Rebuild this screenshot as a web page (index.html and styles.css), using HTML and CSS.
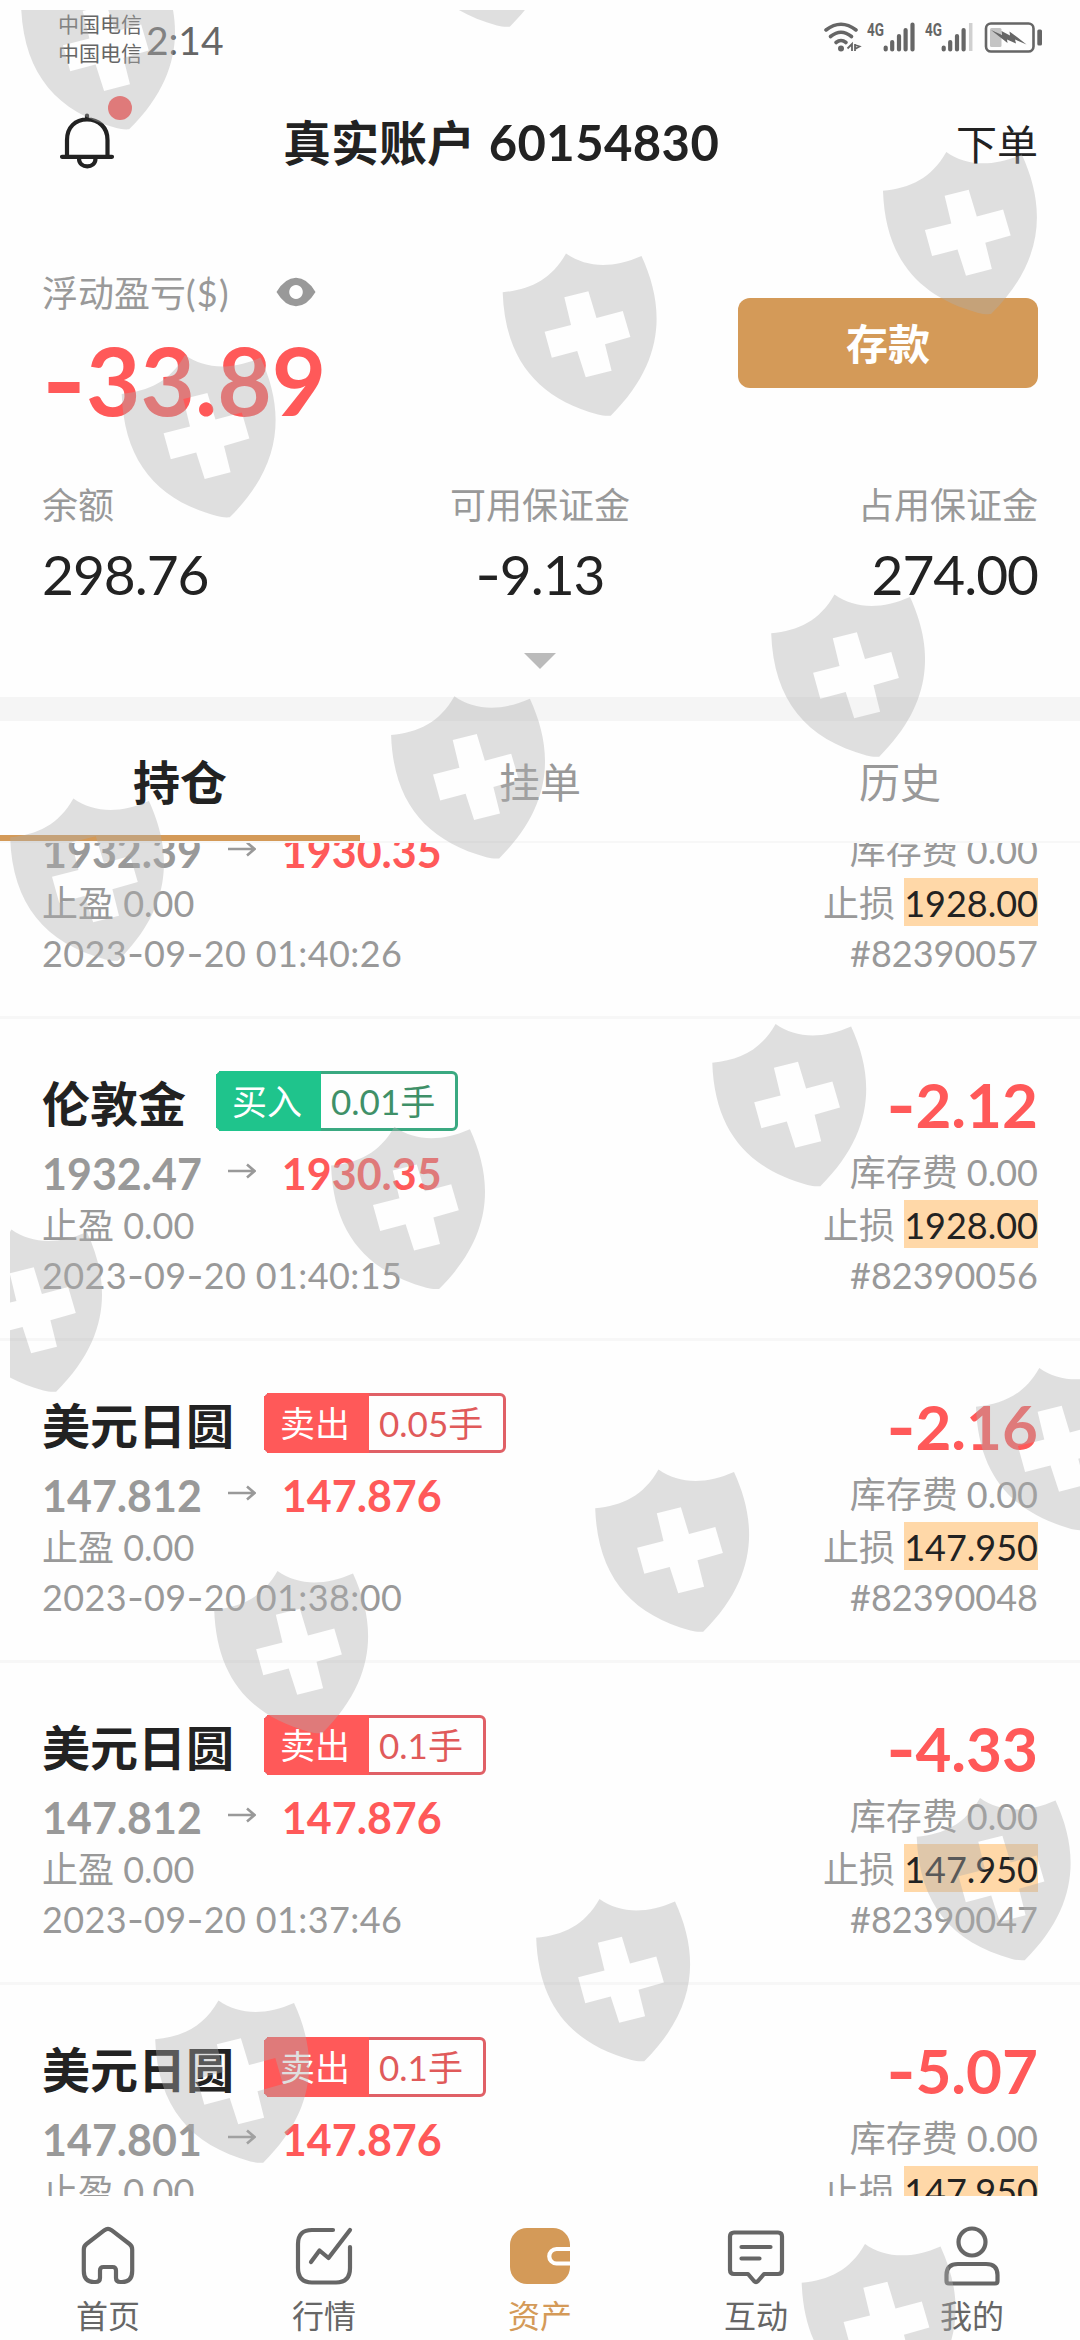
FILE: index.html
```html
<!DOCTYPE html>
<html lang="zh-CN">
<head>
    <meta charset="UTF-8">
    <meta name="viewport" content="width=device-width, initial-scale=1.0">
    <title>资产</title>
    <link rel="stylesheet" href="styles.css">
</head>
<body>
    <div id="app">
        <!-- 状态栏 -->
        <div class="status-bar">
            <div class="carrier">
                <div>中国电信</div>
                <div>中国电信</div>
            </div>
            <div class="time">2:14</div>
            <svg class="status-icons" width="222" height="40" viewBox="820 18 222 40">
                <g fill="none" stroke="#666" stroke-width="3.6" stroke-linecap="round">
                    <path d="M825 30Q840 18.500 855 30"/>
                    <path d="M829.500 36.500Q840 28 850.500 36.500"/>
                    <path d="M835 42.500Q840 38.500 845 42.500"/>
                </g>
                <circle cx="840" cy="48.500" r="3" fill="#666"/>
                <path d="M846.500 48.500L851 44V51M854 44V51M854 45L858.500 46.500L854 49" fill="none" stroke="#666" stroke-width="1.800"/>
                <text x="866" y="36" textLength="17" lengthAdjust="spacingAndGlyphs" class="net">4G</text>
                <path d="M884.700 47.500V49.500M891.200 42V49.500M898 36V49.500M904.600 30V49.500M911.500 24.500V49.500" class="bars"/>
                <text x="924" y="36" textLength="17" lengthAdjust="spacingAndGlyphs" class="net">4G</text>
                <path d="M942.700 47.500V49.500M949.200 42V49.500M956 36V49.500M962.600 30V49.500" class="bars"/>
                <path d="M969.700 23V51" stroke="#d0d0d0" stroke-width="3.500"/>
                <rect x="989" y="28" width="11.500" height="19" rx="1.500" fill="#c4c4c4"/>
                <rect x="985" y="23.500" width="47.500" height="28" rx="5" fill="none" stroke="#666" stroke-width="2.600"/>
                <rect x="1036.300" y="29.500" width="4.700" height="16" rx="1.500" fill="#666"/>
                <path d="M990 30L1001 35L1000.500 31L1009 35.500L1008.500 31.500L1016 37L1025.500 44.500L1014 39.500L1015 43.500L1006 39.500L1006.500 43Z" fill="#666"/>
            </svg>
        </div>

        <!-- 标题 -->
        <div class="header">
            <div class="bell">
                <svg width="60" height="60" viewBox="56 110 60 60" fill="none" stroke="#222" stroke-width="4.200" stroke-linecap="round">
                    <path d="M87 115.500V119M67 156V140C67 127 75.500 119.500 87 119.500S107.500 127 107.500 140V156M62 156.800H112M79 158.500C79 169 95.500 169 95.500 158.500"/>
                </svg>
                <span class="dot"></span>
            </div>
            <h1>真实账户 <span>60154830</span></h1>
            <div class="order">下单</div>
        </div>

        <!-- 账户概览 -->
        <div class="summary">
            <div class="profit">
                <div>
                    <div class="label">浮动盈亏<span class="unit">($)</span>
                        <svg class="eye" width="40" height="30" viewBox="0 0 40 30"><path fill="#999" fill-rule="evenodd" d="M.5 15Q9 .8 20 .8T39.500 15Q31 29.200 20 29.200T.5 15ZM20 8a6.800 7 0 1 0 .01 0Z"/></svg>
                    </div>
                    <div class="profit-num"><i>-</i>33.89</div>
                </div>
                <button class="deposit">存款</button>
            </div>
            <div class="funds">
                <div><div class="label">余额</div><div class="num">298.76</div></div>
                <div><div class="label">可用保证金</div><div class="num"><i>-</i>9.13</div></div>
                <div><div class="label">占用保证金</div><div class="num">274.00</div></div>
            </div>
            <div class="more"></div>
        </div>

        <div class="tabs">
            <div class="tab tab-active">持仓</div>
            <div class="tab">挂单</div>
            <div class="tab">历史</div>
        </div>

        <!-- 持仓列表 -->
        <div class="list">
            <div class="item">
                <div class="left">
                    <div class="price"><span>1932.39</span><svg class="arrow" width="28" height="16" viewBox="0 0 28 16"><path d="M0 8H26M19 1.500L26.500 8L19 14.500"/></svg><span class="now">1930.35</span></div>
                    <div class="line">止盈 <span>0.00</span></div>
                    <div class="date">2023<i>-</i>09<i>-</i>20 01:40:26</div>
                </div>
                <div class="right">
                    <div class="fee">库存费 <span>0.00</span></div>
                    <div class="line">止损 <span class="stop">1928.00</span></div>
                    <div class="no">#82390057</div>
                </div>
            </div>
            <div class="item">
                <div class="left">
                    <div class="name">伦敦金<div class="tag buy"><b>买入</b><span>0.01手</span></div></div>
                    <div class="price"><span>1932.47</span><svg class="arrow" width="28" height="16" viewBox="0 0 28 16"><path d="M0 8H26M19 1.500L26.500 8L19 14.500"/></svg><span class="now">1930.35</span></div>
                    <div class="line">止盈 <span>0.00</span></div>
                    <div class="date">2023<i>-</i>09<i>-</i>20 01:40:15</div>
                </div>
                <div class="right">
                    <div class="loss"><i>-</i>2.12</div>
                    <div class="fee">库存费 <span>0.00</span></div>
                    <div class="line">止损 <span class="stop">1928.00</span></div>
                    <div class="no">#82390056</div>
                </div>
            </div>
            <div class="item">
                <div class="left">
                    <div class="name">美元日圆<div class="tag sell"><b>卖出</b><span>0.05手</span></div></div>
                    <div class="price"><span>147.812</span><svg class="arrow" width="28" height="16" viewBox="0 0 28 16"><path d="M0 8H26M19 1.500L26.500 8L19 14.500"/></svg><span class="now">147.876</span></div>
                    <div class="line">止盈 <span>0.00</span></div>
                    <div class="date">2023<i>-</i>09<i>-</i>20 01:38:00</div>
                </div>
                <div class="right">
                    <div class="loss"><i>-</i>2.16</div>
                    <div class="fee">库存费 <span>0.00</span></div>
                    <div class="line">止损 <span class="stop">147.950</span></div>
                    <div class="no">#82390048</div>
                </div>
            </div>
            <div class="item">
                <div class="left">
                    <div class="name">美元日圆<div class="tag sell"><b>卖出</b><span>0.1手</span></div></div>
                    <div class="price"><span>147.812</span><svg class="arrow" width="28" height="16" viewBox="0 0 28 16"><path d="M0 8H26M19 1.500L26.500 8L19 14.500"/></svg><span class="now">147.876</span></div>
                    <div class="line">止盈 <span>0.00</span></div>
                    <div class="date">2023<i>-</i>09<i>-</i>20 01:37:46</div>
                </div>
                <div class="right">
                    <div class="loss"><i>-</i>4.33</div>
                    <div class="fee">库存费 <span>0.00</span></div>
                    <div class="line">止损 <span class="stop">147.950</span></div>
                    <div class="no">#82390047</div>
                </div>
            </div>
            <div class="item">
                <div class="left">
                    <div class="name">美元日圆<div class="tag sell"><b>卖出</b><span>0.1手</span></div></div>
                    <div class="price"><span>147.801</span><svg class="arrow" width="28" height="16" viewBox="0 0 28 16"><path d="M0 8H26M19 1.500L26.500 8L19 14.500"/></svg><span class="now">147.876</span></div>
                    <div class="line">止盈 <span>0.00</span></div>
                </div>
                <div class="right">
                    <div class="loss"><i>-</i>5.07</div>
                    <div class="fee">库存费 <span>0.00</span></div>
                    <div class="line">止损 <span class="stop">147.950</span></div>
                </div>
            </div>
        </div>

        <!-- 底部导航 -->
        <div class="nav">
            <div class="nav-item">
                <svg width="60" height="62" viewBox="0 0 60 62">
                    <path d="M5.800 24.500Q5.800 21 8.500 19L26.500 5.200Q30 2.700 33.500 5.200L51.500 19Q54.200 21 54.200 24.500V46Q54.200 57 44 57H42.500Q38 57 38 53V45.500Q38 42 34.500 42H25.500Q22 42 22 45.500V53Q22 57 17.500 57H16Q5.800 57 5.800 46Z"/>
                </svg>
                <div>首页</div>
            </div>
            <div class="nav-item">
                <svg width="60" height="62" viewBox="0 0 60 62">
                    <path d="M39 5H18Q4 5 4 19V43Q4 57.500 18 57.500H42Q56 57.500 56 43V22M17 37L25.500 25.500L34.500 33L56 5"/>
                </svg>
                <div>行情</div>
            </div>
            <div class="nav-item nav-active">
                <svg width="60" height="62" viewBox="0 0 60 62">
                    <rect x="0" y="3" width="60" height="56" rx="17" fill="#d49a58" stroke="none"/>
                    <path d="M61 24H46.500a7.200 7.200 0 0 0 0 14.500H61" stroke="#fff" stroke-linecap="butt"/>
                </svg>
                <div>资产</div>
            </div>
            <div class="nav-item">
                <svg width="60" height="62" viewBox="0 0 60 62">
                    <path d="M8 7.500H52Q56 7.500 56 11.500V45Q56 49 52 49H38L32 56Q30 58 28 56L22 49H8Q4 49 4 45V11.500Q4 7.500 8 7.500ZM15.500 22H44.500M15.500 33.500H33.500"/>
                </svg>
                <div>互动</div>
            </div>
            <div class="nav-item">
                <svg width="60" height="62" viewBox="0 0 60 62">
                    <circle cx="30" cy="17" r="13.500"/>
                    <path d="M16 39H44Q55.500 39 55.500 50V56Q55.500 58.500 53 58.500H7Q4.500 58.500 4.500 56V50Q4.500 39 16 39Z"/>
                </svg>
                <div>我的</div>
            </div>
        </div>

        <!-- 水印 -->
        <svg class="mark" width="1070" height="2330" viewBox="10 10 1070 2330">
            <defs>
                <path id="shield" fill-rule="evenodd" d="M.7 39.300C28 36.500 49 27 64 .5C84 14.500 110 16 139.500 3C162 52 165 107 108.700 162.700C104 163 100 162.500 96 161.500C36 145 3 107 .7 39.300ZM62.300 44.300L86.400 38.300L94.500 65L120.800 58L128.400 84L103 91.300L109.600 117.700L83.700 124.300L75.200 98L49.800 104.700L42.600 78.700L69 72Z"/>
            </defs>
            <use href="#shield" x="20.400" y="-33.400"/>
            <use href="#shield" x="401" y="-136"/>
            <use href="#shield" x="882.300" y="151.400"/>
            <use href="#shield" x="502" y="253"/>
            <use href="#shield" x="121" y="354.600"/>
            <use href="#shield" x="770.500" y="594"/>
            <use href="#shield" x="390.400" y="695.700"/>
            <use href="#shield" x="9.400" y="798"/>
            <use href="#shield" x="711.600" y="1023.500"/>
            <use href="#shield" x="330.400" y="1126.300"/>
            <use href="#shield" x="-52.600" y="1229"/>
            <use href="#shield" x="975.300" y="1367.400"/>
            <use href="#shield" x="594.500" y="1469"/>
            <use href="#shield" x="213.500" y="1570.500"/>
            <use href="#shield" x="916" y="1797.500"/>
            <use href="#shield" x="535.500" y="1898.500"/>
            <use href="#shield" x="154.500" y="2000"/>
            <use href="#shield" x="801" y="2243.400"/>
        </svg>
    </div>
</body>
</html>
```
FILE: styles.css
```css
*{
    box-sizing: border-box;
}
body{
    margin: 0;
    background-color: #fefefe;
    color: #222;
    font-family: Lato, "Noto Sans CJK SC", sans-serif;
    font-size: 36px;
}
#app{
    position: relative;
    width: 1080px;
    height: 2340px;
    overflow: hidden;
    display: flex;
    flex-direction: column;
}
/* 负号、连字符 */
i{
    font-family: Inter, sans-serif;
    font-style: normal;
    line-height: 1;
}
.status-bar{
    display: flex;
    height: 82px;
    padding: 9px 37px 0 58px;
    color: #666;
}
.carrier{
    width: 88px;
    font-size: 21px;
    line-height: 29px;
    white-space: nowrap;
}
.time{
    font-size: 39px;
    line-height: 62px;
}
.status-icons{
    margin: 9px 0 0 auto;
}
.net{
    font-family: Roboto, sans-serif;
    font-size: 19px;
    font-weight: bold;
    fill: #666;
}
.bars{
    stroke: #666;
    stroke-width: 4.2;
    stroke-linecap: round;
}
.header{
    display: flex;
    align-items: center;
    height: 124px;
    padding: 0 42px 4px 56px;
}
.bell{
    position: relative;
    width: 227px;
    height: 64px;
}
.dot{
    position: absolute;
    left: 52px;
    top: -14px;
    width: 24px;
    height: 24px;
    border-radius: 50%;
    background-color: #ff5959;
}
h1{
    margin: 0;
    font-size: 48px;
    font-weight: bold;
    line-height: 60px;
}
h1 span{
    margin-left: 2px;
    font-size: 49px;
    letter-spacing: 0.4px;
}
.order{
    margin-left: auto;
    width: 82px;
    font-size: 41px;
}
.summary{
    height: 515px;
    padding: 60px 42px 0;
    border-bottom: 24px solid #f5f5f5;
}
.profit{
    display: flex;
    justify-content: space-between;
    height: 212px;
}
.label{
    color: #999;
    line-height: 54px;
    white-space: nowrap;
}
.unit{
    letter-spacing: 1.2px;
}
.eye{
    margin-left: 37px;
    vertical-align: 0;
}
.profit-num{
    color: #ff5959;
    font-size: 94px;
    font-weight: bold;
    line-height: 120px;
}
.deposit{
    width: 300px;
    height: 90px;
    margin-top: 32px;
    padding: 0 0 4px;
    border: none;
    border-radius: 12px;
    background-color: #d49a58;
    color: white;
    font-family: inherit;
    font-size: 42px;
    font-weight: bold;
}
.funds{
    display: flex;
}
.funds > div{
    flex: 1;
}
.funds > div:nth-child(2){
    text-align: center;
}
.funds > div:nth-child(3){
    text-align: right;
}
.num{
    font-size: 55px;
    line-height: 84px;
    letter-spacing: -1px;
}
.more{
    width: 32px;
    height: 16px;
    margin: 37px auto 0;
    background-color: #bbb;
    clip-path: polygon(0 0, 100% 0, 50% 100%);
}
.tabs{
    display: flex;
    height: 122px;
    border-bottom: 2px solid #f7f7f7;
}
.tab{
    flex: 1;
    height: 120px;
    line-height: 123px;
    text-align: center;
    font-size: 41px;
    color: #999;
}
.tab-active{
    color: #222;
    font-size: 47px;
    font-weight: bold;
    border-bottom: 6px solid #d49a58;
}
.list{
    height: 1353px;
    overflow: hidden;
}
.item{
    display: flex;
    justify-content: space-between;
    height: 322px;
    padding: 52px 42px 0;
    border-bottom: 3px solid #f7f7f7;
    color: #999;
}
.item:first-child{
    height: 195px;
    margin-top: -19px;
    padding-top: 0;
}
.name{
    display: flex;
    align-items: center;
    gap: 30px;
    height: 60px;
    margin-bottom: 15px;
    color: #222;
    font-size: 48px;
    font-weight: bold;
}
.tag{
    display: flex;
    height: 60px;
    border: 3px solid;
    border-radius: 6px;
    font-size: 35px;
    line-height: 54px;
}
.tag b{
    width: 102px;
    padding-right: 6px;
    text-align: center;
    font-weight: normal;
    color: white;
}
.tag span{
    padding: 0 20px 0 10px;
    font-weight: normal;
}
.buy{
    color: #3f9068;
    border-color: #3aa981;
}
.buy b{
    background-color: #1fc48c;
    box-shadow: -3px 0 #1fc48c, 0 -3px #1fc48c, 0 3px #1fc48c;
}
.sell{
    color: #e05a5a;
    border-color: #e06066;
}
.sell b{
    background-color: #ff5959;
    box-shadow: -3px 0 #ff5959, 0 -3px #ff5959, 0 3px #ff5959;
}
.price{
    display: flex;
    align-items: center;
    height: 54px;
    font-size: 43px;
    font-weight: bold;
}
.arrow{
    margin: 0 26px 4px 26px;
    fill: none;
    stroke: #999;
    stroke-width: 2.6;
}
.now{
    color: #ff5959;
}
.line{
    height: 51px;
    line-height: 51px;
}
.date,.no{
    height: 49px;
    line-height: 49px;
}
.date{
    letter-spacing: 0.4px;
}
.right{
    text-align: right;
}
.loss{
    height: 60px;
    margin-bottom: 15px;
    color: #ff5959;
    font-size: 62px;
    font-weight: bold;
    line-height: 67px;
}
.fee{
    height: 54px;
    line-height: 53px;
}
.stop{
    display: inline-block;
    height: 48px;
    line-height: 50px;
    background-color: #ffd8a8;
    color: #222;
}
.nav{
    display: flex;
    height: 144px;
    padding-top: 29px;
}
.nav-item{
    flex: 1;
    text-align: center;
    font-size: 32px;
    line-height: 50px;
    color: #666;
}
.nav-item svg{
    display: block;
    margin: 0 auto 4px;
    fill: none;
    stroke: #666;
    stroke-width: 4.2;
    stroke-linecap: round;
    stroke-linejoin: round;
}
.nav-active{
    color: #d49a58;
}
.mark{
    position: absolute;
    left: 10px;
    top: 10px;
    fill: #afafaf;
    opacity: 0.39;
}
```
